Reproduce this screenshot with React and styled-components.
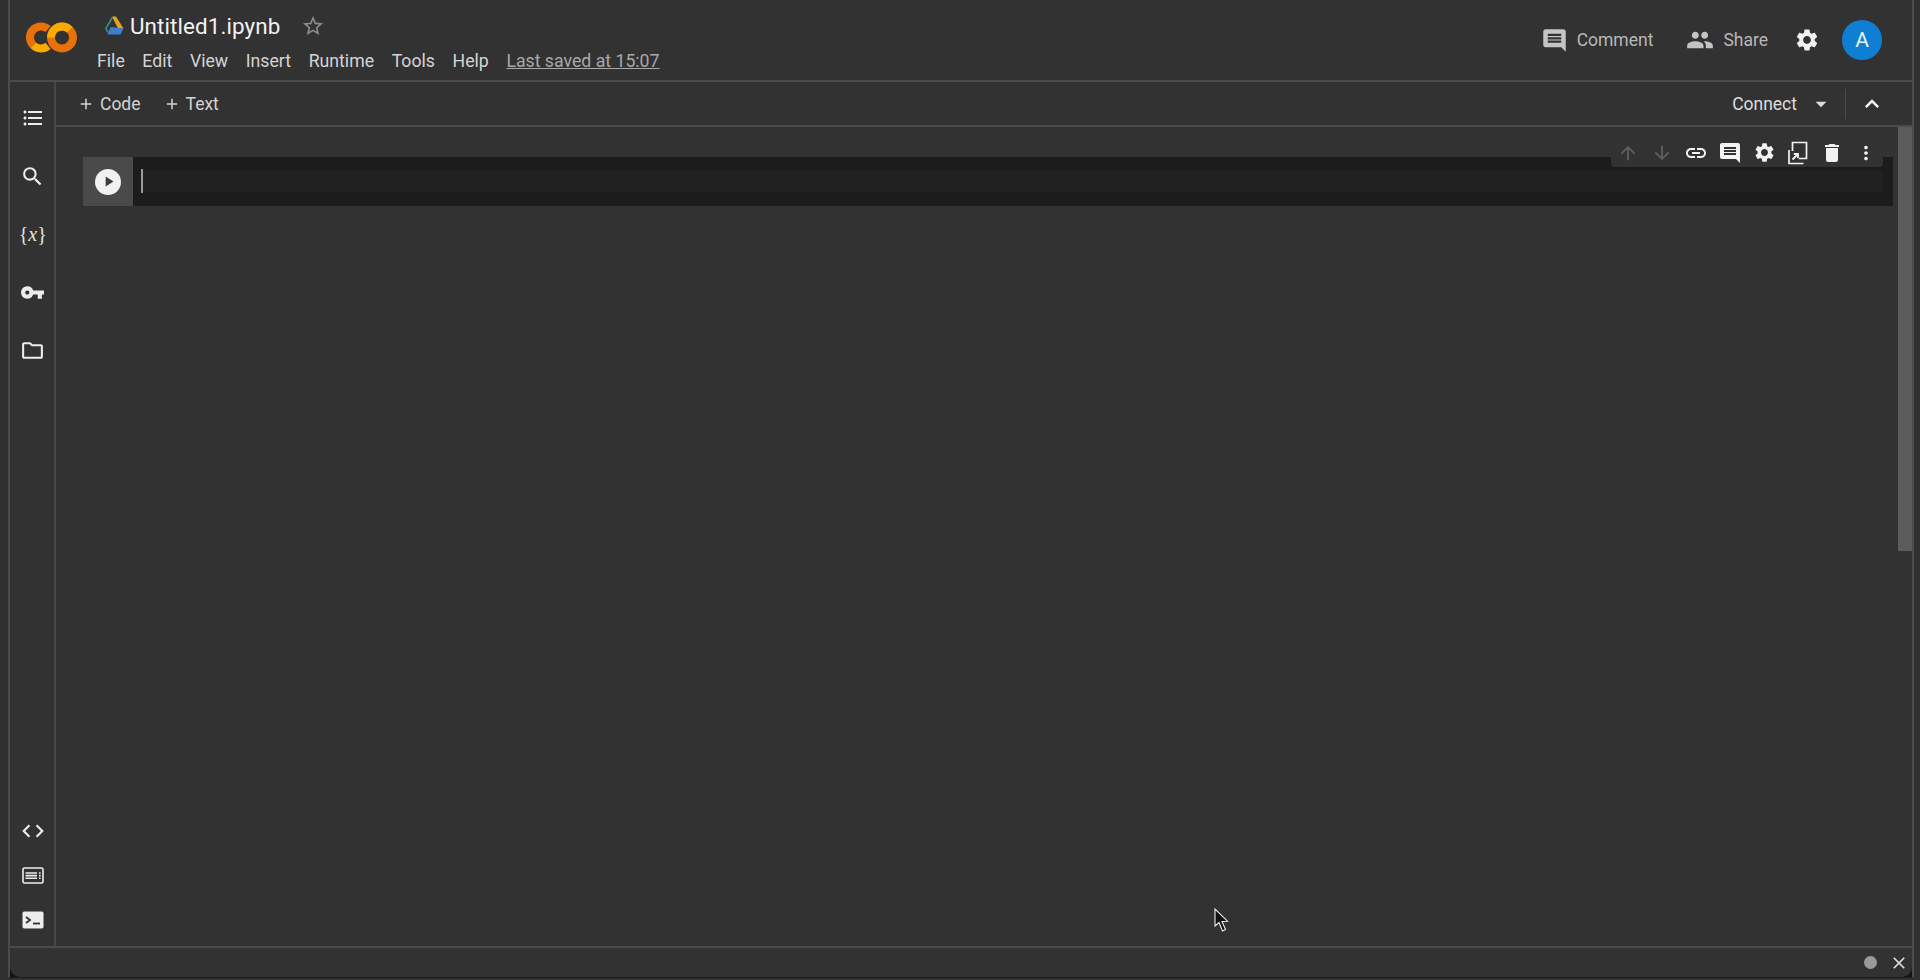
import React from "react";
import styled, { createGlobalStyle } from "styled-components";
import {
  MdAdd,
  MdArrowDownward,
  MdArrowDropDown,
  MdArrowUpward,
  MdClose,
  MdCode,
  MdComment,
  MdDelete,
  MdExpandLess,
  MdFormatListBulleted,
  MdLink,
  MdMoreVert,
  MdOutlineFolder,
  MdPeople,
  MdPlayArrow,
  MdSearch,
  MdSettings,
  MdStarBorder,
  MdVpnKey,
} from "react-icons/md";

const menuItems = ["File", "Edit", "View", "Insert", "Runtime", "Tools", "Help"];

function ColabLogo() {
  return (
    <svg width="54" height="32" viewBox="0 0 54 32" fill="none" strokeWidth="8">
      <path d="M23.07 7.07 A11 11 0 0 0 8.22 23.28" stroke="#e8710a" />
      <path d="M8.22 23.28 A11 11 0 0 0 23.07 23.93" stroke="#f9ab00" />
      <circle cx="37" cy="15.5" r="11" stroke="#e8710a" />
      <path d="M26 15.5 A11 11 0 0 1 44.78 7.72" stroke="#f9ab00" />
    </svg>
  );
}

function DriveLogo() {
  return (
    <svg width="20" height="20" viewBox="0 0 20 20">
      <path d="M8 0.5 L12 0.5 L19.5 12.5 L14 12.5 Z" fill="#e9a11f" />
      <path d="M8 0.5 L1 12.5 L3.5 17 L4.6 15.5 L2.6 12.4 L8.8 2.4 Z" fill="#2c9c8a" />
      <path d="M6.5 11 L19.5 12.5 L16.5 18.5 L3.5 18.5 Z" fill="#3c80cc" />
    </svg>
  );
}

function MirrorIcon() {
  return (
    <svg width="20" height="24" viewBox="0 0 20 24" fill="none" stroke="currentColor" strokeWidth="1.7">
      <path d="M4.5 10 V1.5 H18.5 V17.5 H11" />
      <path d="M1 9 V22.5 H15.5" />
      <path d="M4.5 18.5 L9.5 13.5 M5.8 13 H10 V17.2" strokeWidth="1.8" />
    </svg>
  );
}

function PaletteIcon() {
  return (
    <svg width="22" height="17" viewBox="0 0 22 17" fill="none" stroke="currentColor" strokeWidth="1.6">
      <rect x="1" y="1" width="20" height="15" rx="1.5" />
      <path d="M3.5 6 H15 M3.5 8.6 H15 M3.5 11.2 H15" />
      <path d="M17 6 H18.6 M17 8.6 H18.6 M17 11.2 H18.6" />
    </svg>
  );
}

function TerminalIcon() {
  return (
    <svg width="22" height="18" viewBox="0 0 22 18">
      <rect x="0.5" y="0.5" width="21" height="17" rx="1.8" fill="currentColor" />
      <path d="M4 6 L8 9 L4 12" fill="none" stroke="#323232" strokeWidth="1.8" />
      <path d="M11 12.5 H18" stroke="#323232" strokeWidth="1.8" />
    </svg>
  );
}

function PointerIcon() {
  return (
    <svg width="16" height="25" viewBox="0 0 16 25">
      <path
        d="M1 1 L1 18 L5 14.5 L8.5 23 L11.5 21.5 L8 13.5 L13.5 13.2 Z"
        fill="#111"
        stroke="#eee"
        strokeWidth="1.1"
      />
    </svg>
  );
}

export default function App() {
  return (
    <>
      <GlobalStyle />
      <Frame>
        <Header>
          <LogoSlot>
            <ColabLogo />
          </LogoSlot>
          <TitleBlock>
            <TitleRow>
              <DriveLogo />
              <Title>Untitled1.ipynb</Title>
              <Star>
                <MdStarBorder size={24} />
              </Star>
            </TitleRow>
            <MenuRow>
              {menuItems.map((item) => (
                <MenuItem key={item}>{item}</MenuItem>
              ))}
              <LastSaved>Last saved at 15:07</LastSaved>
            </MenuRow>
          </TitleBlock>
          <HeaderActions>
            <HeaderButton $space={33}>
              <MdComment size={27} />
              Comment
            </HeaderButton>
            <HeaderButton $space={26}>
              <MdPeople size={28} />
              Share
            </HeaderButton>
            <SettingsButton>
              <MdSettings size={26} />
            </SettingsButton>
            <Avatar>A</Avatar>
          </HeaderActions>
        </Header>
        <Body>
          <Sidebar>
            <SideGroup>
              <SideIcon>
                <MdFormatListBulleted size={24} />
              </SideIcon>
              <SideIcon>
                <MdSearch size={25} />
              </SideIcon>
              <SideIcon>
                <Variables>
                  {"{"}
                  <i>x</i>
                  {"}"}
                </Variables>
              </SideIcon>
              <SideIcon>
                <MdVpnKey size={25} />
              </SideIcon>
              <SideIcon>
                <MdOutlineFolder size={25} />
              </SideIcon>
            </SideGroup>
            <BottomGroup>
              <SideIcon $small>
                <MdCode size={26} />
              </SideIcon>
              <SideIcon $small>
                <PaletteIcon />
              </SideIcon>
              <SideIcon $small>
                <TerminalIcon />
              </SideIcon>
            </BottomGroup>
          </Sidebar>
          <Main>
            <Toolbar>
              <AddButton>
                <MdAdd size={18} />
                Code
              </AddButton>
              <AddButton>
                <MdAdd size={18} />
                Text
              </AddButton>
              <ToolbarRight>
                <Connect>
                  Connect
                  <MdArrowDropDown size={26} />
                </Connect>
                <Divider />
                <Collapse>
                  <MdExpandLess size={28} />
                </Collapse>
              </ToolbarRight>
            </Toolbar>
            <Content>
              <Notebook>
                <Cell>
                  <RunGutter>
                    <RunButton>
                      <MdPlayArrow size={17} />
                    </RunButton>
                  </RunGutter>
                  <EditorArea>
                    <EditorStrip>
                      <Caret />
                    </EditorStrip>
                  </EditorArea>
                  <CellToolbar>
                    <CellAction $off>
                      <MdArrowUpward size={22} />
                    </CellAction>
                    <CellAction $off>
                      <MdArrowDownward size={22} />
                    </CellAction>
                    <CellAction>
                      <MdLink size={24} />
                    </CellAction>
                    <CellAction>
                      <MdComment size={24} />
                    </CellAction>
                    <CellAction>
                      <MdSettings size={23} />
                    </CellAction>
                    <CellAction>
                      <MirrorIcon />
                    </CellAction>
                    <CellAction>
                      <MdDelete size={24} />
                    </CellAction>
                    <CellAction>
                      <MdMoreVert size={22} />
                    </CellAction>
                  </CellToolbar>
                </Cell>
              </Notebook>
              <ScrollTrack>
                <ScrollThumb />
              </ScrollTrack>
            </Content>
          </Main>
        </Body>
        <StatusBar>
          <StatusDot />
          <MdClose size={20} />
        </StatusBar>
        <Pointer>
          <PointerIcon />
        </Pointer>
      </Frame>
    </>
  );
}

const GlobalStyle = createGlobalStyle`
  html, body {
    margin: 0;
    height: 100%;
    background: #303030;
  }
  body {
    font-family: Roboto, "Liberation Sans", sans-serif;
    overflow: hidden;
  }
`;

const Frame = styled.div`
  position: relative;
  box-sizing: border-box;
  margin: 0 6px 0 7.5px;
  height: 978px;
  display: flex;
  flex-direction: column;
  background: #141414;
  border-left: 2px solid #4b4b4b;
  border-right: 2px solid #4b4b4b;
  border-bottom: 1px solid #1c1c1c;
`;

const Header = styled.header`
  flex: 0 0 80px;
  display: flex;
  background: #323232;
  border-bottom: 2px solid #4b4b4b;
`;

const LogoSlot = styled.div`
  width: 87.5px;
  padding: 22px 0 0 15.5px;
  box-sizing: border-box;
`;

const TitleBlock = styled.div`
  display: flex;
  flex-direction: column;
  padding-top: 15px;
`;

const TitleRow = styled.div`
  display: flex;
  align-items: center;
  height: 22px;
  padding-left: 7px;
  gap: 6px;
  color: #fff;
`;

const Title = styled.span`
  font-size: 22.4px;
  color: #f2f2f2;
  letter-spacing: 0.1px;
`;

const Star = styled.span`
  display: flex;
  margin-left: 15px;
  color: #8e8e8e;
`;

const MenuRow = styled.nav`
  display: flex;
  align-items: baseline;
  margin-top: 14px;
  gap: 17.6px;
  font-size: 17.7px;
  color: #d4d4d4;
`;

const MenuItem = styled.span``;

const LastSaved = styled.span`
  color: #a8a8a8;
  text-decoration: underline;
`;

const HeaderActions = styled.div`
  margin-left: auto;
  display: flex;
  align-items: center;
  padding: 0 30px 0 0;
`;

const HeaderButton = styled.div`
  display: flex;
  align-items: center;
  gap: 9px;
  margin-right: ${(p) => p.$space}px;
  font-size: 17.5px;
  color: #b8b8b8;

  svg {
    color: #c4c4c4;
  }
`;

const SettingsButton = styled.div`
  display: flex;
  color: #f0f0f0;
  margin-right: 22px;
`;

const Avatar = styled.div`
  width: 40px;
  height: 40px;
  border-radius: 50%;
  background: #0f7fd4;
  color: #e8f4e8;
  display: flex;
  align-items: center;
  justify-content: center;
  font-size: 21px;
`;

const Body = styled.div`
  flex: 1;
  min-height: 0;
  display: flex;
  background: #323232;
`;

const Sidebar = styled.aside`
  flex: 0 0 42.5px;
  display: flex;
  flex-direction: column;
  justify-content: space-between;
  border-right: 2px solid #474747;
  padding: 7px 0 4px 2px;
`;

const SideGroup = styled.div`
  display: flex;
  flex-direction: column;
`;

const BottomGroup = styled.div`
  display: flex;
  flex-direction: column;
`;

const SideIcon = styled.div`
  height: ${(p) => (p.$small ? "44.5px" : "58.2px")};
  display: flex;
  align-items: center;
  justify-content: center;
  color: #ededed;
`;

const Variables = styled.span`
  font-family: "Liberation Serif", serif;
  font-size: 20px;
  color: #e4e4e4;
`;

const Main = styled.main`
  flex: 1;
  min-width: 0;
  display: flex;
  flex-direction: column;
`;

const Toolbar = styled.div`
  flex: 0 0 43px;
  display: flex;
  align-items: center;
  padding-left: 21px;
  gap: 22px;
  border-bottom: 2px solid #4b4b4b;
`;

const AddButton = styled.div`
  display: flex;
  align-items: center;
  gap: 5px;
  font-size: 17.5px;
  color: #d4d4d4;
`;

const ToolbarRight = styled.div`
  margin-left: auto;
  display: flex;
  align-items: center;
  height: 30px;
  padding-right: 26px;
`;

const Connect = styled.div`
  display: flex;
  align-items: center;
  gap: 11px;
  font-size: 17.5px;
  color: #dedede;
`;

const Divider = styled.div`
  width: 1px;
  height: 30px;
  background: #4b4b4b;
  margin: 0 12px 0 11px;
`;

const Collapse = styled.div`
  display: flex;
  color: #fff;
`;

const Content = styled.div`
  flex: 1;
  min-height: 0;
  display: flex;
`;

const Notebook = styled.div`
  flex: 1;
  min-width: 0;
  padding: 30px 5px 0 27px;
`;

const Cell = styled.section`
  position: relative;
  height: 49px;
  display: flex;
  background: #1c1c1c;
`;

const RunGutter = styled.div`
  flex: 0 0 50px;
  display: flex;
  align-items: center;
  justify-content: center;
  background: #4a4a4a;
`;

const RunButton = styled.div`
  width: 26px;
  height: 26px;
  border-radius: 50%;
  background: #f1f1f1;
  display: flex;
  align-items: center;
  justify-content: center;
  color: #3c3c3c;
`;

const EditorArea = styled.div`
  flex: 1;
  min-width: 0;
  padding: 14px 10px 14px 8px;
`;

const EditorStrip = styled.div`
  height: 21px;
  background: #212121;
  position: relative;
`;

const Caret = styled.div`
  position: absolute;
  left: 0;
  top: -2px;
  width: 2px;
  height: 24px;
  background: #9a9a9a;
`;

const CellToolbar = styled.div`
  position: absolute;
  top: -19px;
  right: 10px;
  height: 29px;
  width: 272px;
  display: flex;
  justify-content: space-around;
  align-items: center;
  background: #323232;
  border-radius: 4px;
`;

const CellAction = styled.div`
  width: 34px;
  display: flex;
  justify-content: center;
  color: ${(p) => (p.$off ? "#5e5e5e" : "#f2f2f2")};
`;

const ScrollTrack = styled.div`
  flex: 0 0 14px;
`;

const ScrollThumb = styled.div`
  height: 424px;
  background: #5c5c5c;
`;

const StatusBar = styled.footer`
  flex: 0 0 29px;
  display: flex;
  align-items: center;
  justify-content: flex-end;
  gap: 12px;
  padding-right: 3px;
  background: #323232;
  border-top: 2px solid #4b4b4b;
  border-radius: 0 0 10px 10px;
  color: #d8d8d8;
`;

const StatusDot = styled.span`
  width: 13px;
  height: 13px;
  border-radius: 50%;
  background: #9a9a9a;
`;

const Pointer = styled.div`
  position: absolute;
  left: 1204px;
  top: 908px;
`;
